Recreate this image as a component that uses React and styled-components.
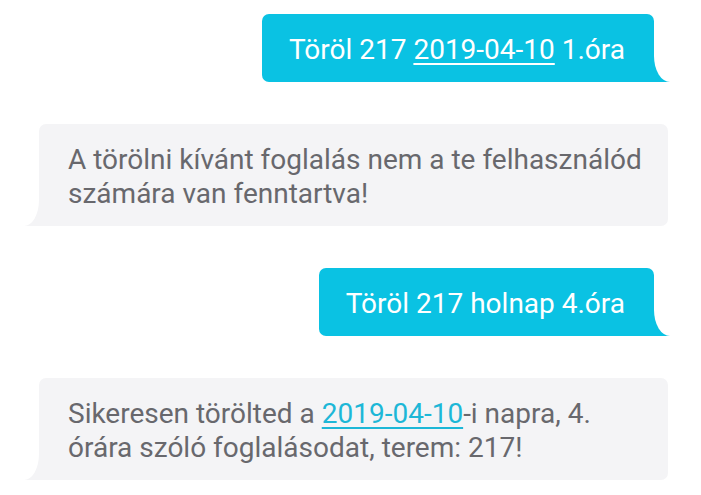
import React from "react";
import styled, { createGlobalStyle } from "styled-components";

const GlobalStyle = createGlobalStyle`
  html, body {
    margin: 0;
    padding: 0;
    background: #ffffff;
  }
  body {
    font-family: Roboto, "Noto Sans", "Liberation Sans", sans-serif;
  }
`;

const messages = [
  { id: 1, mine: true, parts: ["Töröl 217 ", { link: "2019-04-10" }, " 1.óra"] },
  {
    id: 2,
    mine: false,
    parts: ["A törölni kívánt foglalás nem a te felhasználód számára van fenntartva!"],
  },
  { id: 3, mine: true, parts: ["Töröl 217 holnap 4.óra"] },
  {
    id: 4,
    mine: false,
    parts: [
      "Sikeresen törölted a ",
      { link: "2019-04-10" },
      "-i napra, 4. órára szóló foglalásodat, terem: 217!",
    ],
  },
];

function App() {
  return (
    <>
      <GlobalStyle />
      <Thread>
        {messages.map((msg) => (
          <Bubble key={msg.id} mine={msg.mine}>
            {msg.parts.map((p, i) =>
              typeof p === "string" ? (
                <React.Fragment key={i}>{p}</React.Fragment>
              ) : (
                <DateLink key={i} mine={msg.mine}>
                  {p.link}
                </DateLink>
              )
            )}
          </Bubble>
        ))}
      </Thread>
    </>
  );
}

export default App;

const Thread = styled.div`
  display: flex;
  flex-direction: column;
  gap: 42px;
  padding: 14px 0 14px 0;
  width: 701px;
  box-sizing: border-box;
`;

const Bubble = styled.div`
  position: relative;
  box-sizing: border-box;
  font-size: 28px;
  line-height: 34px;
  padding: ${(p) => (p.mine ? "19px 29px 15px 27px" : "19px 20px 15px 29px")};
  align-self: ${(p) => (p.mine ? "flex-end" : "flex-start")};
  margin: ${(p) => (p.mine ? "0 47px 0 0" : "0 0 0 39px")};
  width: ${(p) => (p.mine ? "auto" : "629px")};
  background: ${(p) => (p.mine ? "#0ac2e3" : "#f4f4f6")};
  color: ${(p) => (p.mine ? "#ffffff" : "#68686d")};
  border-radius: ${(p) => (p.mine ? "7px 7px 0 7px" : "7px 7px 7px 0")};

  /* tail: coloured block with a white quarter-ellipse carved out of it */
  &::before {
    content: "";
    position: absolute;
    bottom: 0;
    ${(p) => (p.mine ? "right: -16px;" : "left: -15px;")}
    width: ${(p) => (p.mine ? "16px" : "15px")};
    height: 26px;
    background: ${(p) => (p.mine ? "#0ac2e3" : "#f4f4f6")};
  }

  &::after {
    content: "";
    position: absolute;
    bottom: 0;
    ${(p) => (p.mine ? "right: -16px;" : "left: -15px;")}
    width: ${(p) => (p.mine ? "16px" : "15px")};
    height: 26px;
    background: #ffffff;
    ${(p) =>
      p.mine
        ? "border-bottom-left-radius: 16px 26px;"
        : "border-bottom-right-radius: 15px 26px;"}
  }
`;

const DateLink = styled.span`
  color: ${(p) => (p.mine ? "#ffffff" : "#1db7d7")};
  text-decoration: underline;
  text-decoration-thickness: 2px;
  text-underline-offset: 4px;
`;
